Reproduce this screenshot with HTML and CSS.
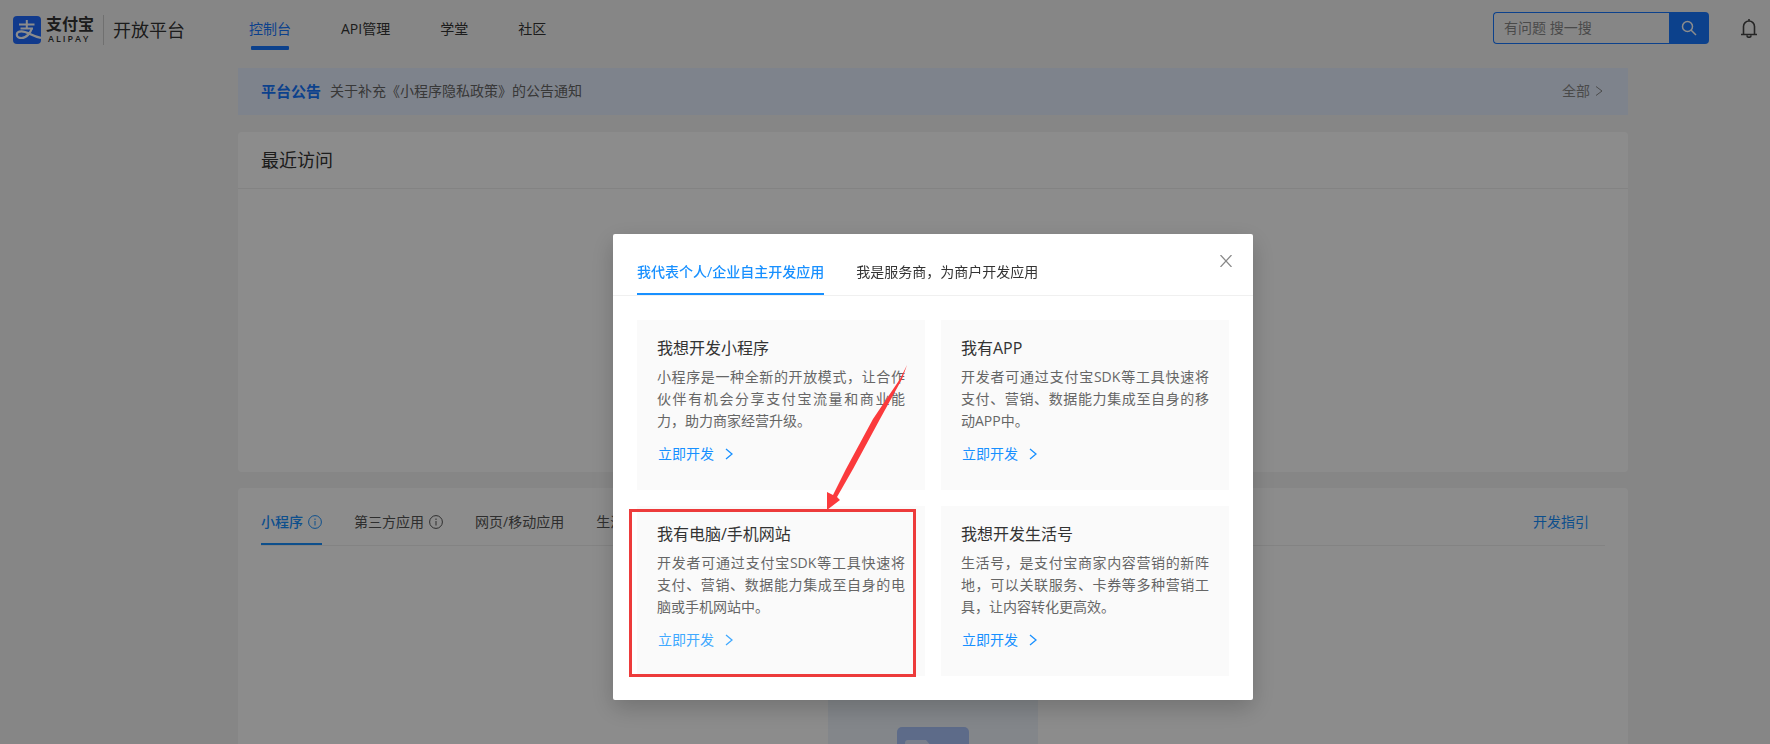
FILE: index.html
```html
<!DOCTYPE html>
<html lang="zh-CN">
<head>
    <meta charset="UTF-8">
    <meta name="viewport" content="width=device-width, initial-scale=1.0">
    <title>支付宝开放平台</title>
    <link rel="stylesheet" href="styles.css">
</head>
<body>
    <header class="header">
        <a class="logo" href="#">
            <svg class="logo-mark" viewBox="0 0 28 28" width="28" height="28" aria-hidden="true">
                <rect width="28" height="28" rx="4" fill="#1f6bff"/>
                <g fill="none" stroke="#fff">
                    <path d="M6 8.500H21.500M13.800 4V12.500M7.500 12.500H20" stroke-width="2"/>
                    <path d="M19 12C17.500 17 13.500 22 8.500 22C5.500 22 3.800 20.500 3.800 18.700C3.800 16.500 6 15.300 8.500 15.300C14 15.300 18 19.500 28 22" stroke-width="2.200"/>
                </g>
            </svg>
            <span class="logo-name">
                <strong>支付宝</strong>
                <small>ALIPAY</small>
            </span>
            <span class="logo-title">开放平台</span>
        </a>
        <nav class="nav">
            <a class="active" href="#">控制台</a>
            <a href="#">API管理</a>
            <a href="#">学堂</a>
            <a href="#">社区</a>
        </nav>
        <form class="search">
            <input type="text" placeholder="有问题 搜一搜" aria-label="搜索">
            <button type="button" aria-label="搜索">
                <svg viewBox="0 0 16 16" width="16" height="16" fill="none" stroke="#fff" stroke-width="1.500"><circle cx="6.500" cy="6.500" r="5"/><path d="M10 10L15 15"/></svg>
            </button>
        </form>
        <button class="bell" type="button" aria-label="消息">
            <svg viewBox="0 0 16 20" width="16" height="20" fill="none" stroke="#444" stroke-width="1.600"><path d="M0 16.500H16M2.500 16.500V8.500A5.500 5.500 0 0 1 13.500 8.500V16.500M8 3V1M6 17.500A2 1.800 0 0 0 10 17.500"/></svg>
        </button>
    </header>

    <main class="main">
        <section class="notice">
            <strong>平台公告</strong>
            <a class="notice-text" href="#">关于补充《小程序隐私政策》的公告通知</a>
            <a class="notice-more" href="#">全部
                <svg viewBox="0 0 8 12" width="8" height="12" fill="none" stroke="currentColor"><path d="M1 1.500L7 6L1 10.500"/></svg>
            </a>
        </section>

        <section class="panel recent">
            <h2>最近访问</h2>
        </section>

        <section class="panel apps">
            <div class="app-tabs">
                <button class="active" type="button">小程序
                    <svg class="info" viewBox="0 0 14 14" width="14" height="14" fill="none" stroke="currentColor"><circle cx="7" cy="7" r="6.400"/><path d="M7 6V10.500M7 3.500V5"/></svg>
                </button>
                <button type="button">第三方应用
                    <svg class="info" viewBox="0 0 14 14" width="14" height="14" fill="none" stroke="currentColor"><circle cx="7" cy="7" r="6.400"/><path d="M7 6V10.500M7 3.500V5"/></svg>
                </button>
                <button type="button">网页/移动应用</button>
                <button type="button">生活号</button>
                <a class="guide" href="#">开发指引</a>
            </div>
            <svg class="empty" viewBox="0 0 210 120" width="210" height="120" aria-hidden="true">
                <rect width="210" height="120" fill="#eef4fb"/>
                <path d="M69 120V35a5 5 0 0 1 5-5h62a5 5 0 0 1 5 5v85z" fill="#a9c3fa"/>
                <path d="M77 120V46a3 3 0 0 1 3-3h18l6 7h29v70z" fill="#dce8ff"/>
            </svg>
        </section>
    </main>

    <div class="mask">
        <div class="modal" role="dialog" aria-modal="true">
            <div class="modal-tabs">
                <button class="active" type="button">我代表个人/企业自主开发应用</button>
                <button type="button">我是服务商，为商户开发应用</button>
            </div>
            <button class="close" type="button" aria-label="关闭">
                <svg viewBox="0 0 12 12" width="12" height="12" fill="none" stroke="currentColor" stroke-width="1.200"><path d="M.5 0L11.500 12M11.500 0L.5 12"/></svg>
            </button>
            <div class="cards">
                <article class="card">
                    <h3>我想开发小程序</h3>
                    <p>小程序是一种全新的开放模式，让合作伙伴有机会分享支付宝流量和商业能力，助力商家经营升级。</p>
                    <a href="#">立即开发 <svg viewBox="0 0 8 12" width="8" height="12"><path d="M1 1L7 6L1 11"/></svg></a>
                </article>
                <article class="card">
                    <h3>我有APP</h3>
                    <p>开发者可通过支付宝SDK等工具快速将支付、营销、数据能力集成至自身的移动APP中。</p>
                    <a href="#">立即开发 <svg viewBox="0 0 8 12" width="8" height="12"><path d="M1 1L7 6L1 11"/></svg></a>
                </article>
                <article class="card hover">
                    <h3>我有电脑/手机网站</h3>
                    <p>开发者可通过支付宝SDK等工具快速将支付、营销、数据能力集成至自身的电脑或手机网站中。</p>
                    <a href="#">立即开发 <svg viewBox="0 0 8 12" width="8" height="12"><path d="M1 1L7 6L1 11"/></svg></a>
                    <div class="highlight"></div>
                    <svg class="arrow" viewBox="0 0 82 146" width="82" height="146" aria-hidden="true"><path d="M81 0L74 14L47 54L20 104L7 130L1 127V145L14 135L11 132L27 104L54 54L76 14Z" fill="#fb3a3c"/></svg>
                </article>
                <article class="card">
                    <h3>我想开发生活号</h3>
                    <p>生活号，是支付宝商家内容营销的新阵地，可以关联服务、卡券等多种营销工具，让内容转化更高效。</p>
                    <a href="#">立即开发 <svg viewBox="0 0 8 12" width="8" height="12"><path d="M1 1L7 6L1 11"/></svg></a>
                </article>
            </div>
        </div>
    </div>
</body>
</html>
```
FILE: styles.css
```css
* {
    box-sizing: border-box;
}
body {
    margin: 0;
    height: 100vh;
    overflow: hidden;
    background: #f5f5f5;
    color: #333;
    font-family: "Open Sans", "Noto Sans CJK SC", sans-serif;
    font-size: 14px;
    line-height: 22px;
}
a {
    color: inherit;
    text-decoration: none;
}
button {
    padding: 0;
    border: none;
    background: none;
    color: inherit;
    font: inherit;
    cursor: pointer;
}
svg {
    flex: none;
}
.header {
    display: flex;
    align-items: center;
    height: 56px;
    padding: 0 13px;
}
.logo {
    display: flex;
    align-items: center;
    padding-top: 4px;
}
.logo-name {
    display: flex;
    flex-direction: column;
    margin-left: 5px;
    padding-right: 9px;
    border-right: 1px solid #ccc;
}
.logo-name strong {
    font-size: 16px;
    line-height: 18px;
}
.logo-name small {
    padding-left: 2px;
    font-size: 9px;
    font-weight: 600;
    line-height: 12px;
    letter-spacing: 2px;
}
.logo-title {
    margin-left: 9px;
    font-size: 18px;
}
.nav {
    display: flex;
    gap: 50px;
    margin-left: 64px;
    padding-top: 2px;
}
.nav a {
    display: flex;
    flex-direction: column;
    align-items: center;
    height: 22px;
}
.nav a.active {
    color: #1677ff;
}
.nav a.active::after {
    content: "";
    flex: none;
    width: 38px;
    height: 4px;
    margin-top: 6px;
    border-radius: 1px;
    background: #1677ff;
}
.search {
    display: flex;
    width: 216px;
    height: 32px;
    margin-left: auto;
}
.search input {
    flex: 1;
    min-width: 0;
    padding: 0 10px;
    border: 1px solid #1677ff;
    border-right: none;
    border-radius: 4px 0 0 4px;
    background: transparent;
    font: inherit;
}
.search input::placeholder {
    color: #888;
}
.search button {
    display: flex;
    align-items: center;
    justify-content: center;
    width: 40px;
    border-radius: 0 4px 4px 0;
    background: #1677ff;
}
.bell {
    display: flex;
    margin-left: 32px;
}
.main {
    padding: 12px 142px 0 238px;
}
.notice {
    display: flex;
    align-items: center;
    height: 47px;
    padding: 0 25px 2px 23px;
    background: #e6efff;
}
.notice strong {
    color: #1677ff;
    font-size: 15px;
}
.notice-text {
    margin-left: 9px;
    color: #666;
}
.notice-more {
    display: flex;
    align-items: center;
    gap: 5px;
    margin-left: auto;
    color: #888;
}
.panel {
    border-radius: 4px;
    background: #fff;
}
.recent {
    height: 340px;
    margin-top: 17px;
}
.recent h2 {
    margin: 0;
    padding: 16px 23px;
    border-bottom: 1px solid #eee;
    font-size: 18px;
    font-weight: 400;
    line-height: 24px;
}
.apps {
    height: 340px;
    margin-top: 16px;
    padding: 12px 23px;
}
.app-tabs {
    display: flex;
    gap: 32px;
    border-bottom: 1px solid #eee;
    color: #555;
}
.app-tabs button {
    display: flex;
    align-items: center;
    gap: 5px;
    height: 45px;
    border-bottom: 2px solid transparent;
}
.app-tabs button.active {
    border-bottom-color: #1890ff;
    color: #1890ff;
    font-weight: 500;
}
.guide {
    margin-left: auto;
    padding: 11px 16px;
    color: #1890ff;
}
.empty {
    display: block;
    margin: 151px auto 0;
}
.mask {
    position: fixed;
    inset: 0;
    padding: 234px 0 0 96px;
    background: rgba(0, 0, 0, 0.45);
}
.modal {
    position: relative;
    width: 640px;
    margin: 0 auto;
    border-radius: 2px;
    background: #fff;
    box-shadow: 0 8px 24px rgba(0, 0, 0, 0.2);
}
.modal-tabs {
    display: flex;
    gap: 32px;
    padding: 15px 24px 0;
    border-bottom: 1px solid #f0f0f0;
}
.modal-tabs button {
    height: 46px;
    padding-top: 2px;
    border-bottom: 2px solid transparent;
}
.modal-tabs button.active {
    border-bottom-color: #1890ff;
    color: #1890ff;
    font-weight: 500;
}
.close {
    position: absolute;
    top: 21px;
    right: 21px;
    display: flex;
    color: #888;
}
.cards {
    display: grid;
    grid-template-columns: 1fr 1fr;
    gap: 16px;
    padding: 24px;
}
.card {
    position: relative;
    padding: 16px 20px 25px;
    background: #fafafa;
}
.card h3 {
    margin: 0 0 6px;
    font-size: 16px;
    font-weight: 400;
    line-height: 24px;
}
.card p {
    margin: 0 0 11px;
    color: #666;
    text-align: justify;
}
.card a {
    display: flex;
    align-items: center;
    gap: 11px;
    padding-left: 1px;
    color: #1890ff;
}
.card a svg {
    fill: none;
    stroke: currentColor;
    stroke-width: 1.3;
}
.card.hover a {
    color: #40a9ff;
}
/* red frame and arrow over the third card */
.highlight {
    position: absolute;
    top: 3px;
    left: -8px;
    width: 287px;
    height: 168px;
    border: 3px solid #ed3b3b;
}
.arrow {
    position: absolute;
    top: -141px;
    left: 189px;
}
```
